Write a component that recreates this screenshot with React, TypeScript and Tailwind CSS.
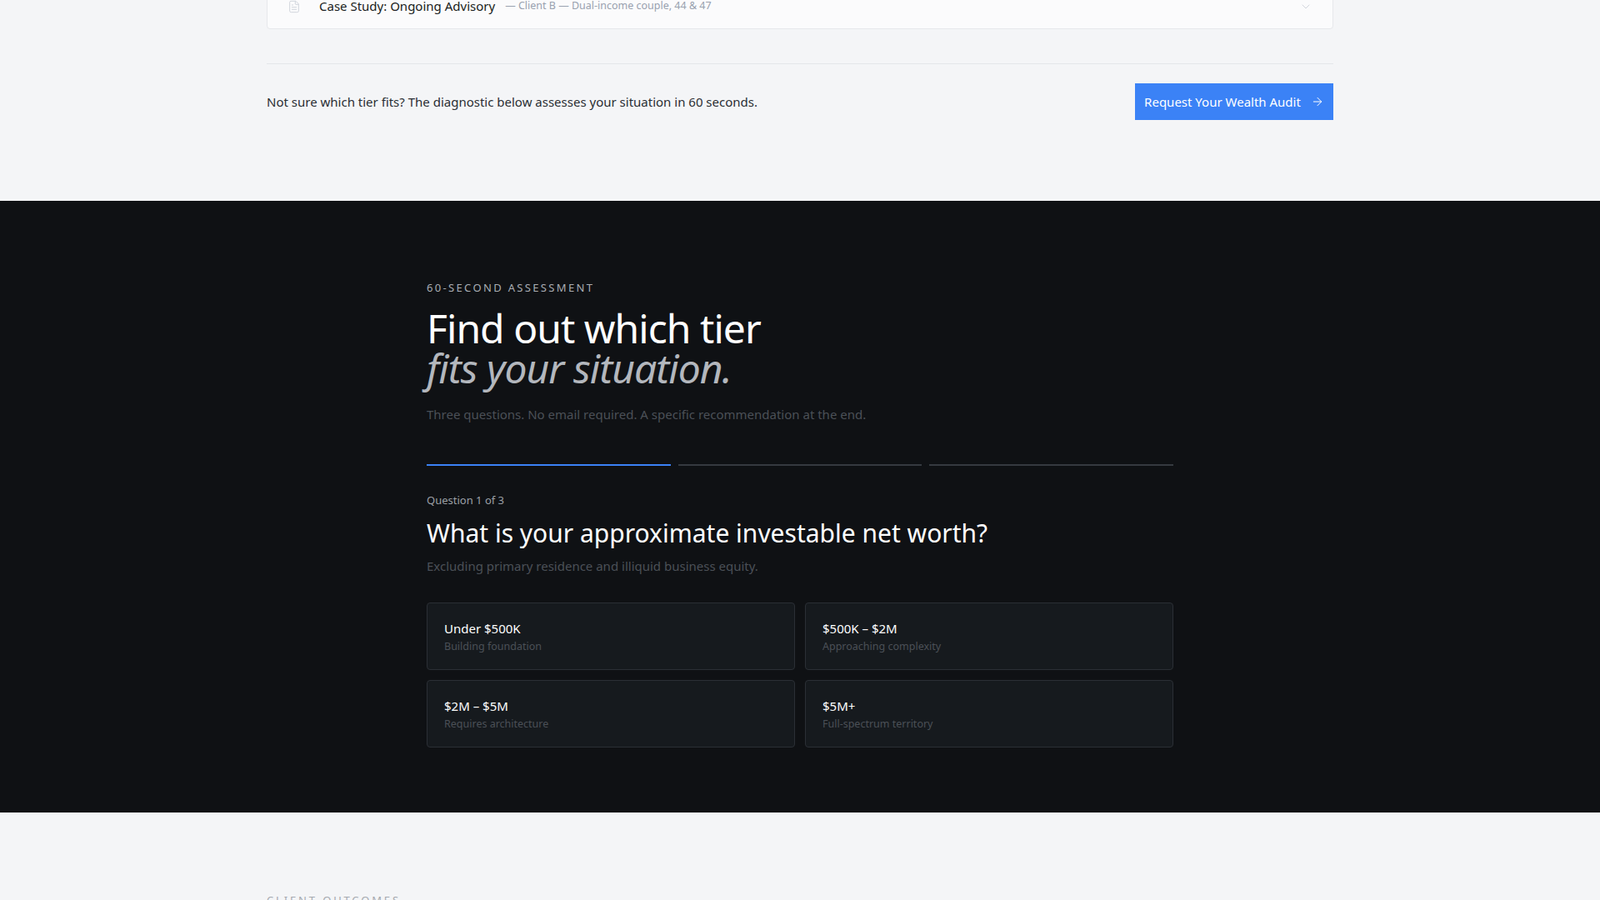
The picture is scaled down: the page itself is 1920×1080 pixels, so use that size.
import { FileText, ChevronDown, ArrowRight } from "lucide-react";

const opts = [
  ["Under $500K", "Building foundation"],
  ["$500K – $2M", "Approaching complexity"],
  ["$2M – $5M", "Requires architecture"],
  ["$5M+", "Full-spectrum territory"],
];

export default function App() {
  return (
    <div className="min-h-screen bg-[#f4f5f7] font-[family-name:'Liberation_Sans',Arial,sans-serif] overflow-hidden">
      <section className="h-[241px] flex flex-col">
        <div className="mx-auto w-[1280px] flex flex-col">
          <div className="-mt-[21px] h-14 bg-[#fbfbfc] border border-[#e6e8eb] rounded-sm flex items-center px-6 pt-[1px]">
            <FileText className="w-4 h-4 text-gray-300" strokeWidth={1.5} />
            <span className="ml-[22px] text-[15px] text-[#1a1d21]">Case Study: Ongoing Advisory</span>
            <span className="ml-3 text-[12.5px] text-gray-400">— Client B — Dual-income couple, 44 &amp; 47</span>
            <ChevronDown className="ml-auto w-4 h-4 text-gray-300" strokeWidth={1.5} />
          </div>
          <div className="mt-[41px] border-t border-[#e4e6e9]" />
          <div className="mt-[23px] flex items-center justify-between">
            <p className="text-[15px] text-[#2a2e33]">Not sure which tier fits? The diagnostic below assesses your situation in 60 seconds.</p>
            <button className="h-11 w-[238px] bg-[#3b82f6] text-white text-[15px] flex items-center justify-center gap-3">
              Request Your Wealth Audit <ArrowRight className="w-4 h-4" strokeWidth={1.5} />
            </button>
          </div>
        </div>
      </section>
      <section className="bg-[#0f1114] h-[734px] pt-[96px]">
        <div className="mx-auto w-[896px]">
          <div className="text-[13px] tracking-[0.18em] text-[#a9adb3] leading-4">60-SECOND ASSESSMENT</div>
          <h2 className="mt-[17px] font-[family-name:'Liberation_Serif',serif] text-[48px] leading-[48px] tracking-[-0.02em] text-white">
            Find out which tier
            <br />
            <em className="text-[#b3b7bd]">fits your situation.</em>
          </h2>
          <p className="mt-[20px] text-[15px] text-[#4b5057]">Three questions. No email required. A specific recommendation at the end.</p>
          <div className="mt-[48px] grid grid-cols-3 gap-[9px]">
            <div className="h-[2px] bg-[#3b82f6]" />
            <div className="h-[2px] bg-[#353a40]" />
            <div className="h-[2px] bg-[#353a40]" />
          </div>
          <div className="mt-[32px] text-[13px] text-[#9ca0a6]">Question 1 of 3</div>
          <h3 className="mt-[12px] font-[family-name:'Liberation_Serif',serif] text-[30px] leading-9 text-white">What is your approximate investable net worth?</h3>
          <p className="mt-[10px] text-[15px] text-[#4b5057]">Excluding primary residence and illiquid business equity.</p>
          <div className="mt-[32px] grid grid-cols-2 gap-3">
            {opts.map(([a, b]) => (
              <div key={a} className="h-[81px] bg-[#161a1e] border border-[#2b2f35] rounded-sm px-5 pt-[20px]">
                <div className="text-[15px] text-white leading-5">{a}</div>
                <div className="mt-[3px] text-[12.5px] text-[#4b5057]">{b}</div>
              </div>
            ))}
          </div>
        </div>
      </section>
      <section className="mx-auto w-[1280px] pt-[96px]">
        <div className="text-[13px] tracking-[0.22em] text-[#a6aab0]">CLIENT OUTCOMES</div>
      </section>
    </div>
  );
}
